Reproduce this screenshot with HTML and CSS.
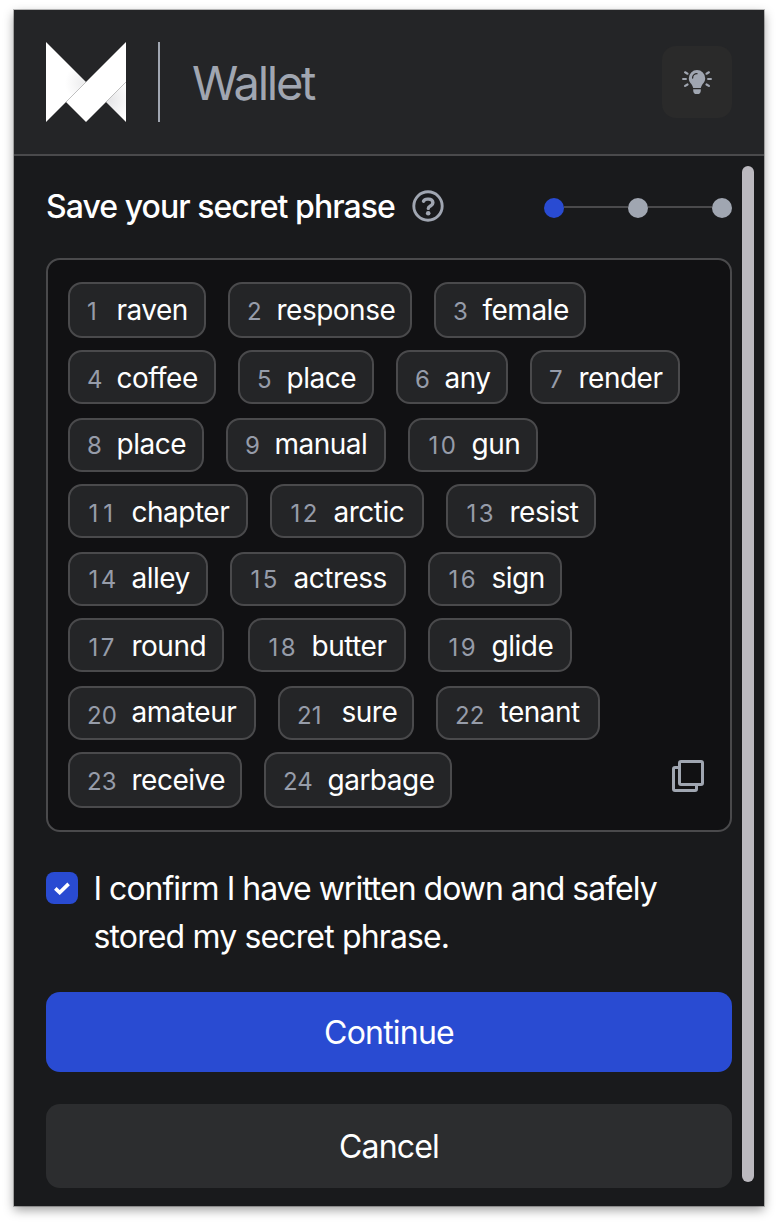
FILE: index.html
```html
<!DOCTYPE html>
<html lang="en">
<head>
<meta charset="utf-8">
<title>Wallet</title>
<link rel="stylesheet" href="styles.css">
</head>
<body>
<div class="wallet">
  <header class="header">
    <svg class="logo" viewBox="0 0 80 80" aria-hidden="true">
      <defs>
        <radialGradient id="fold" gradientUnits="userSpaceOnUse" cx="37" cy="41" r="18"><stop offset="0" stop-color="#ededee"/><stop offset="1" stop-color="#fff"/></radialGradient>
        <radialGradient id="fold2" gradientUnits="userSpaceOnUse" cx="62" cy="58" r="24"><stop offset="0" stop-color="#e4e4e6"/><stop offset="1" stop-color="#fff"/></radialGradient>
      </defs>
      <path fill="url(#fold)" d="M0 0l40 40L0 80z"/>
      <path fill="url(#fold2)" d="M80 40v40L60 60z"/>
      <path fill="#fff" d="M80 0v40L40 80 20 60z"/>
      <path stroke="#bbb" stroke-width=".6" d="M20 60l20-20M60 60l20-20"/>
    </svg>
    <span class="divider"></span>
    <span class="brand">Wallet</span>
    <button class="theme" aria-label="Theme">
      <svg width="32" height="26" viewBox="0 0 32 26">
        <path fill="#a0a6b1" d="M16 1a8.200 8.200 0 0 0-8.200 8.200c0 2.800 1.300 4.300 2.500 5.800 1 1.300 1.500 2.500 1.900 4h7.600c.4-1.500.9-2.700 1.900-4 1.200-1.500 2.500-3 2.500-5.800A8.200 8.200 0 0 0 16 1zM12.200 20.200h7.600v1.200a3.600 3.600 0 0 1-3.600 3.600h-.4a3.600 3.600 0 0 1-3.600-3.600z"/>
        <path fill="none" stroke="#2a2a2a" stroke-width="1.300" stroke-linecap="round" d="M11.600 9c0-2.500 1.900-4.300 4.400-4.300"/>
        <path stroke="#a0a6b1" stroke-width="2.200" stroke-linecap="round" d="M2.100 10h2.800M27.100 10h2.800M4.100 3.300l2.400 1.400M27.900 3.300l-2.400 1.400M4.100 16.900l2.400-1.400M27.900 16.900l-2.400-1.400"/>
      </svg>
    </button>
  </header>
  <div class="viewport">
    <main class="content">
      <div class="heading">
        <h1 class="title">Save your secret phrase</h1>
        <svg class="help" viewBox="0 0 32 32">
          <circle cx="16" cy="16" r="14.200" fill="none" stroke="#a0a6b1" stroke-width="2.900"/>
          <path fill="none" stroke="#a0a6b1" stroke-width="3.400" stroke-linecap="round" stroke-linejoin="round" d="M11.500 11.200c.7-1.500 1.900-2.100 3.900-2.100h1.300c2.300 0 4.200 1.400 4.200 3.600 0 1.500-.9 2.300-2.100 3.100-1.500.8-2.500 1.300-2.500 2.600"/>
          <circle cx="16.200" cy="23.200" r="2.300" fill="#a0a6b1"/>
        </svg>
        <div class="steps"><span class="dot active"></span><span class="line"></span><span class="dot"></span><span class="line"></span><span class="dot"></span></div>
      </div>
      <section class="phrase">
        <div class="row r1"><span class="chip"><i>1</i><b>raven</b></span><span class="chip"><i>2</i><b>response</b></span><span class="chip"><i>3</i><b>female</b></span></div>
        <div class="row r2"><span class="chip"><i>4</i><b>coffee</b></span><span class="chip"><i>5</i><b>place</b></span><span class="chip"><i>6</i><b>any</b></span><span class="chip"><i>7</i><b>render</b></span></div>
        <div class="row r3"><span class="chip"><i>8</i><b>place</b></span><span class="chip"><i>9</i><b>manual</b></span><span class="chip wide teen"><i>10</i><b>gun</b></span></div>
        <div class="row r4"><span class="chip wide teen eleven"><i>11</i><b>chapter</b></span><span class="chip wide teen"><i>12</i><b>arctic</b></span><span class="chip wide teen"><i>13</i><b>resist</b></span></div>
        <div class="row r5"><span class="chip wide teen"><i>14</i><b>alley</b></span><span class="chip wide teen"><i>15</i><b>actress</b></span><span class="chip wide teen"><i>16</i><b>sign</b></span></div>
        <div class="row r6"><span class="chip wide teen"><i>17</i><b>round</b></span><span class="chip wide teen"><i>18</i><b>butter</b></span><span class="chip wide teen"><i>19</i><b>glide</b></span></div>
        <div class="row r7"><span class="chip wide"><i>20</i><b>amateur</b></span><span class="chip wide"><i>21</i><b>sure</b></span><span class="chip wide"><i>22</i><b>tenant</b></span></div>
        <div class="row r8"><span class="chip wide"><i>23</i><b>receive</b></span><span class="chip wide"><i>24</i><b>garbage</b></span>
          <svg class="copy" viewBox="0 0 32 32" fill="none" stroke="#a0a6b1" stroke-width="3" stroke-linejoin="round"><rect x="7.500" y="1.500" width="23" height="23" rx="1.500"/><path d="M7.500 7.500H3a1.500 1.500 0 0 0-1.500 1.500v20A1.500 1.500 0 0 0 3 30.500h20a1.500 1.500 0 0 0 1.500-1.500v-4.500"/></svg>
        </div>
      </section>
      <label class="confirm">
        <span class="check"><svg viewBox="0 0 16 13" width="16" height="13"><path fill="none" stroke="#fff" stroke-width="3.600" d="M1.300 6.400l4.400 4.200 8.900-8.700"/></svg></span>
        <span class="terms"><span class="first">I confirm I have written down and safely</span><br>stored my secret phrase.</span>
      </label>
      <button class="btn primary">Continue</button>
      <button class="btn secondary">Cancel</button>
    </main>
    <div class="scrollbar"></div>
  </div>
</div>
</body>
</html>
```
FILE: styles.css
```css
* { box-sizing: border-box; }
body {
  margin: 0;
  padding: 10px 14px 18px;
  background: #fff;
  color: #fff;
  font-family: Inter, "Liberation Sans", sans-serif;
}
button { border: 0; padding: 0; font: inherit; color: inherit; }
.wallet {
  width: 750px;
  height: 1196px;
  background: #191a1c;
  box-shadow: 0 0 0 1px rgba(0,0,0,.24), 0 4px 10px rgba(0,0,0,.38);
}
.header {
  display: flex;
  align-items: center;
  height: 146px;
  padding: 0 32px;
  border-bottom: 2px solid #4a4a4c;
  background: #242527;
}
.logo { width: 80px; height: 80px; }
.divider { width: 2px; height: 80px; margin: 0 32px; background: #a0a6b1; }
.brand { padding-top: 2px; font-size: 47px; line-height: 56px; letter-spacing: -2.3px; color: #a0a6b1; }
.theme {
  display: flex;
  align-items: center;
  justify-content: center;
  width: 70px;
  height: 72px;
  margin-left: auto;
  border-radius: 14px;
  background: #2a2a2a;
}
.viewport { display: flex; height: 1050px; }
.content { width: 686px; margin-left: 32px; }
.scrollbar { width: 12px; height: 1016px; margin: 10px 0 0 10px; border-radius: 6px; background: #bbb9bf; }
.heading { display: flex; align-items: center; height: 102px; }
.title { margin: 0; font-size: 32px; line-height: 40px; font-weight: 500; letter-spacing: -.95px; white-space: nowrap; }
.help { width: 32px; height: 32px; margin: -2px 0 0 17px; }
.steps { display: flex; align-items: center; margin: 2px 0 0 auto; }
.dot { width: 20px; height: 20px; border-radius: 50%; background: #a0a6b1; }
.dot.active { background: #294bd2; }
.line { width: 64px; height: 2px; margin-top: -2px; background: #4a4a4c; }
.phrase {
  height: 574px;
  padding: 22px 20px;
  border: 2px solid #4a4a4c;
  border-radius: 14px;
  background: #111113;
}
.row { display: flex; gap: 22px; height: 54px; margin-bottom: 14px; }
.r1 { height: 56px; margin-bottom: 12px; }
.r3, .r5, .r7 { margin-bottom: 12px; }
.r8 { height: 56px; margin: 0; }
.chip {
  display: flex;
  align-items: baseline;
  flex: none;
  padding: 9px 0 0 17px;
  border: 2px solid #4a4a4c;
  border-radius: 14px;
  background: #242527;
  line-height: 34px;
  white-space: nowrap;
}
.r3 .chip, .r5 .chip { padding-top: 7px; }
.chip i { width: 29.5px; font-style: normal; font-size: 24px; color: #969ca9; }
.chip.wide i { width: 44.5px; }
.chip.teen i { padding-left: 1.5px; letter-spacing: 2.4px; }
.chip.eleven i { letter-spacing: 5px; }
.chip b { font-weight: 400; font-size: 28px; letter-spacing: -.5px; }
.r7 .chip b { position: relative; top: -2px; }
.r1 .chip:nth-child(1) { width: 138px; }
.r1 .chip:nth-child(2) { width: 184px; }
.r1 .chip:nth-child(3) { width: 152px; }
.r2 .chip:nth-child(1) { width: 148px; }
.r2 .chip:nth-child(2) { width: 136px; }
.r2 .chip:nth-child(3) { width: 112px; }
.r2 .chip:nth-child(4) { width: 150px; }
.r3 .chip:nth-child(1) { width: 136px; }
.r3 .chip:nth-child(2) { width: 160px; }
.r3 .chip:nth-child(3) { width: 130px; }
.r4 .chip:nth-child(1) { width: 180px; }
.r4 .chip:nth-child(2) { width: 154px; }
.r4 .chip:nth-child(3) { width: 150px; }
.r5 .chip:nth-child(1) { width: 140px; }
.r5 .chip:nth-child(2) { width: 176px; }
.r5 .chip:nth-child(3) { width: 134px; }
.r6 .chip:nth-child(1) { width: 156px; margin-right: 2px; }
.r6 .chip:nth-child(2) { width: 158px; }
.r6 .chip:nth-child(3) { width: 144px; }
.r7 .chip:nth-child(1) { width: 188px; }
.r7 .chip:nth-child(2) { width: 136px; }
.r7 .chip:nth-child(3) { width: 164px; }
.r8 .chip:nth-child(1) { width: 174px; }
.r8 .chip:nth-child(2) { width: 188px; }
.copy { width: 32px; height: 32px; margin: 8px 6px 0 auto; }
.confirm { display: flex; gap: 16px; height: 96px; margin: 33px 0 31px; }
.check { display: flex; align-items: center; justify-content: center; width: 32px; height: 32px; margin-top: 7px; border-radius: 8px; background: #294bd2; }
.terms { margin-left: -.5px; font-size: 32px; line-height: 48px; letter-spacing: -.86px; white-space: nowrap; }
.first { letter-spacing: -1px; }
.btn { display: block; width: 686px; border-radius: 14px; font-size: 32px; letter-spacing: -.8px; text-align: center; }
.primary { height: 80px; margin-bottom: 32px; background: #294bd2; }
.secondary { height: 84px; background: #2c2d2f; }
```
